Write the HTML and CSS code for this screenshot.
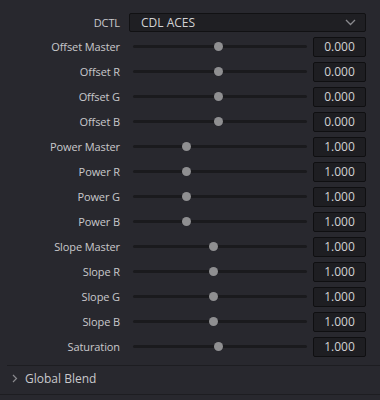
FILE: index.html
```html
<!DOCTYPE html>
<html>
<head>
<meta charset="utf-8">
<link rel="stylesheet" href="styles.css">
</head>
<body>
<div class="panel">
  <div class="rows">
    <div class="row head">
      <div class="label">DCTL</div>
      <div class="select">
        <span>CDL ACES</span>
        <svg class="chev" width="11" height="7" viewBox="0 0 11 7"><path d="M1 1 L5.5 5.5 L10 1" fill="none" stroke="#8a8a8e" stroke-width="1.3"/></svg>
      </div>
    </div>
    <div class="row"><div class="label">Offset Master</div><div class="slider"><div class="track"><div class="thumb" style="left:49.4%"></div></div></div><div class="value">0.000</div></div>
    <div class="row"><div class="label">Offset R</div><div class="slider"><div class="track"><div class="thumb" style="left:49.4%"></div></div></div><div class="value">0.000</div></div>
    <div class="row"><div class="label">Offset G</div><div class="slider"><div class="track"><div class="thumb" style="left:49.4%"></div></div></div><div class="value">0.000</div></div>
    <div class="row"><div class="label">Offset B</div><div class="slider"><div class="track"><div class="thumb" style="left:49.4%"></div></div></div><div class="value">0.000</div></div>
    <div class="row"><div class="label">Power Master</div><div class="slider"><div class="track"><div class="thumb" style="left:30.5%"></div></div></div><div class="value">1.000</div></div>
    <div class="row"><div class="label">Power R</div><div class="slider"><div class="track"><div class="thumb" style="left:30.5%"></div></div></div><div class="value">1.000</div></div>
    <div class="row"><div class="label">Power G</div><div class="slider"><div class="track"><div class="thumb" style="left:30.5%"></div></div></div><div class="value">1.000</div></div>
    <div class="row"><div class="label">Power B</div><div class="slider"><div class="track"><div class="thumb" style="left:30.5%"></div></div></div><div class="value">1.000</div></div>
    <div class="row"><div class="label">Slope Master</div><div class="slider"><div class="track"><div class="thumb" style="left:46.5%"></div></div></div><div class="value">1.000</div></div>
    <div class="row"><div class="label">Slope R</div><div class="slider"><div class="track"><div class="thumb" style="left:46.5%"></div></div></div><div class="value">1.000</div></div>
    <div class="row"><div class="label">Slope G</div><div class="slider"><div class="track"><div class="thumb" style="left:46.5%"></div></div></div><div class="value">1.000</div></div>
    <div class="row"><div class="label">Slope B</div><div class="slider"><div class="track"><div class="thumb" style="left:46.5%"></div></div></div><div class="value">1.000</div></div>
    <div class="row"><div class="label">Saturation</div><div class="slider"><div class="track"><div class="thumb" style="left:49.4%"></div></div></div><div class="value">1.000</div></div>
  </div>
  <div class="section">
    <svg class="arrow" width="6" height="9" viewBox="0 0 6 9"><path d="M1 1 L4.5 4.5 L1 8" fill="none" stroke="#8a8a8e" stroke-width="1.2"/></svg>
    <span>Global Blend</span>
  </div>
  <div class="foot"></div>
</div>
</body>
</html>
```

FILE: styles.css
```css
html, body {
  margin: 0;
  padding: 0;
  background: #28282e;
}
body {
  width: 380px;
  height: 400px;
  overflow: hidden;
  font-family: "Open Sans", "Noto Sans", sans-serif;
  color: #c9c9cc;
}
.panel {
  display: flex;
  flex-direction: column;
  height: 400px;
}
.rows {
  padding: 10px 14px 6px 0;
  display: flex;
  flex-direction: column;
}
.row {
  height: 25px;
  display: flex;
  align-items: center;
}
.row.head {
  height: 24px;
}
.label {
  width: 120px;
  text-align: right;
  font-size: 11px;
  letter-spacing: -0.1px;
  margin-right: 9px;
  white-space: nowrap;
}
.select {
  flex: 1;
  height: 19px;
  box-sizing: border-box;
  border: 1px solid #111113;
  border-radius: 2px;
  background: #1f1f23;
  display: flex;
  align-items: center;
  justify-content: space-between;
  padding: 0 9px 0 11px;
  font-size: 12px;
  color: #d2d2d4;
}
.chev {
  display: block;
}
.slider {
  flex: 1;
  padding: 0 4px;
  margin-right: 2px;
  height: 10px;
  display: flex;
  align-items: center;
}
.track {
  position: relative;
  flex: 1;
  height: 3px;
  border-radius: 2px;
  background: #1a1a1d;
}
.thumb {
  position: absolute;
  top: 50%;
  width: 9px;
  height: 9px;
  margin: -4.5px 0 0 -4.5px;
  border-radius: 50%;
  background: #8f8f91;
}
.value {
  width: 53px;
  height: 20px;
  box-sizing: border-box;
  border: 1px solid #0f0f11;
  border-radius: 2px;
  background: #1e1e22;
  font-size: 12px;
  line-height: 18px;
  text-align: center;
  color: #d2d2d4;
}
.section {
  margin-left: 7px;
  border-top: 1px solid #1d1d21;
  height: 29px;
  box-sizing: border-box;
  padding: 0 0 3px 5px;
  display: flex;
  align-items: center;
  font-size: 12px;
  color: #c9c9cc;
}
.section .arrow {
  margin-right: 7px;
}
.foot {
  flex: 1;
  border-top: 1px solid #1d1d21;
}
```
